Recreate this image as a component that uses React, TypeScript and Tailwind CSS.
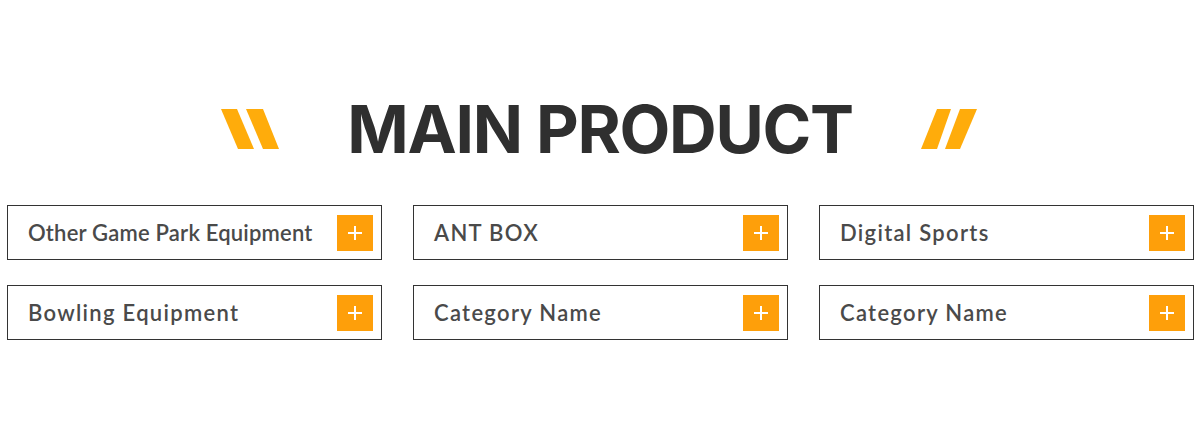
import React from 'react';

const items = [
  { name: 'Other Game Park Equipment', tight: true },
  { name: 'ANT BOX' },
  { name: 'Digital Sports' },
  { name: 'Bowling Equipment' },
  { name: 'Category Name' },
  { name: 'Category Name' },
];

function Slashes({ dir }: { dir: 'back' | 'fwd' }) {
  // two parallelograms, 58x40
  return (
    <svg width="58" height="40" viewBox="0 0 58 40" className="shrink-0">
      {dir === 'back' ? (
        <g fill="#ffac0b">
          <polygon points="0,0 16,0 33,40 17,40" />
          <polygon points="25,0 42,0 58,40 42,40" />
        </g>
      ) : (
        <g fill="#ffac0b">
          <polygon points="16,0 30,0 16,40 0,40" />
          <polygon points="39,0 56,0 39,40 24,40" />
        </g>
      )}
    </svg>
  );
}

function PlusBox() {
  return (
    <span className="flex h-9 w-9 shrink-0 items-center justify-center bg-[#fe9f0a]">
      <svg width="14" height="14" viewBox="0 0 14 14">
        <path d="M7 0v14M0 7h14" stroke="#fff" strokeWidth="2" />
      </svg>
    </span>
  );
}

export default function App() {
  return (
    <div className="h-[446px] w-[1200px] bg-white font-['Lato',sans-serif]">
      <div className="flex items-center justify-center gap-[68px] pt-[96px]">
        <Slashes dir="back" />
        <h2 className="font-['Inter',sans-serif] text-[66px] font-bold leading-[66px] tracking-[-1.3px] text-[#2f2f2f]">
          MAIN PRODUCT
        </h2>
        <Slashes dir="fwd" />
      </div>
      <div className="mt-[43px] grid grid-cols-[375px_375px_375px] gap-x-[31px] gap-y-[25px] pl-[7px]">
        {items.map((it, i) => (
          <div
            key={i}
            className="flex h-[55px] items-center justify-between border border-[#333] pl-[20px] pr-[8px]"
          >
            <span
              className={
                it.tight
                  ? 'text-[22px] font-semibold tracking-[0.2px] text-[#4a4a4a]'
                  : 'text-[22px] font-semibold tracking-[1.3px] text-[#4a4a4a]'
              }
            >
              {it.name}
            </span>
            <PlusBox />
          </div>
        ))}
      </div>
    </div>
  );
}
